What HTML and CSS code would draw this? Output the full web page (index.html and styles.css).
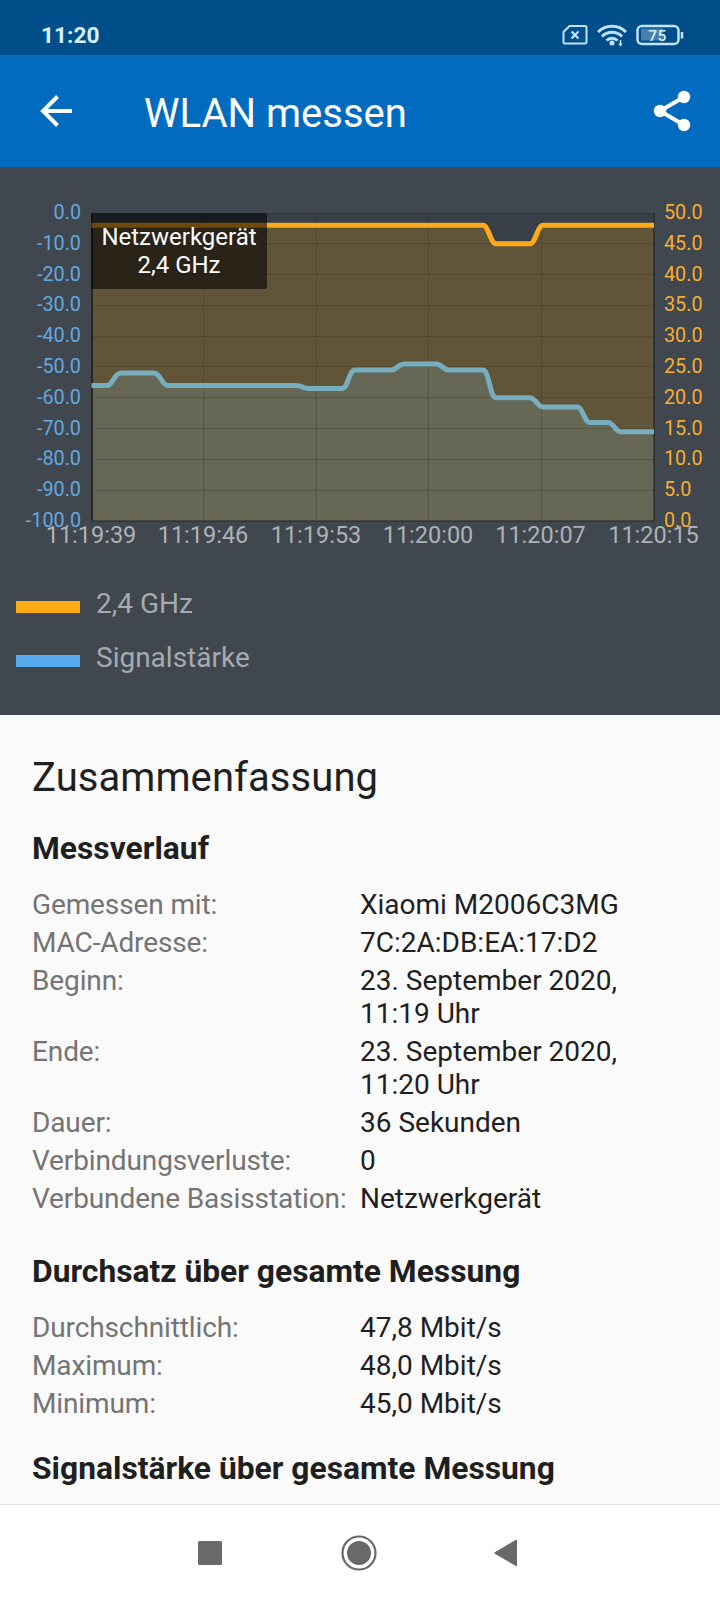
FILE: index.html
```html
<!DOCTYPE html>
<html lang="de">
<head>
<meta charset="utf-8">
<title>WLAN messen</title>
<link rel="stylesheet" href="styles.css">
</head>
<body>
<div class="screen">
  <header class="status">
    <span class="clock">11:20</span>
    <svg class="status-icons" width="124" height="28" viewBox="0 0 124 28" fill="none" stroke="#c3e2fb">
      <path d="M8.500 4H24a1.500 1.500 0 0 1 1.500 1.500V20a1.500 1.500 0 0 1-1.500 1.500H4A1.500 1.500 0 0 1 2.500 20V10z" stroke-width="2"/>
      <path d="M10.500 9.500l7 7m0-7l-7 7" stroke-width="2.200"/>
      <path d="M37 10a20 20 0 0 1 28 0M41 14.500a14 14 0 0 1 20 0M45.500 18.500a8 8 0 0 1 11 0" stroke-width="2.900"/>
      <circle cx="51" cy="21" r="2.500" fill="#c3e2fb" stroke="none"/>
      <path d="M59.500 18v6" stroke-width="1.500"/>
      <path d="M57.500 21.500h4l-2 3z" fill="#c3e2fb" stroke="none"/>
      <rect x="80" y="6.500" width="22" height="12" fill="#4681ae" stroke="none"/>
      <rect x="76.500" y="4" width="41" height="18" rx="4.500" stroke-width="2.500"/>
      <path d="M121 10v6.500" stroke-width="2.500"/>
      <text class="battery" x="96.500" y="18.500">75</text>
    </svg>
  </header>
  <div class="appbar">
    <svg width="34" height="34" viewBox="0 0 34 34" fill="none" stroke="#fff" stroke-width="4"><path d="M33 17H4M18.500 2.500L4 17l14.500 14.500"/></svg>
    <h1 class="title">WLAN messen</h1>
    <svg width="38" height="42" viewBox="0 0 38 42" fill="#fff"><path d="M31 7L7 21l24 14" fill="none" stroke="#fff" stroke-width="4"/><circle cx="31" cy="7" r="6.200"/><circle cx="7" cy="21" r="6.200"/><circle cx="31" cy="35" r="6.200"/></svg>
  </div>
  <section class="chart-panel">
    <svg class="chart" width="720" height="393" viewBox="0 167 720 393">
      <rect x="92" y="213" width="562" height="308" fill="#393f48"/>
      <path fill="#615539" d="M92 225.300H483C488.500 225.300 490.500 243.800 496 243.800H530C535.500 243.800 537.500 225.300 543 225.300H654V521H92z"/>
      <path fill="#666755" d="M92 385.500H107C113 385.500 114 373 121 373H154C160 373 162 385.500 168 385.500H296C302 385.500 303 388.500 309 388.500H342C348 388.500 349 370 355 370H391C397 370 398 364 404 364H436C442 364 443 370 449 370H483C489 370 490 397.700 496 397.700H530C536 397.700 537 407 543 407H577C583 407 584 422.500 590 422.500H608C614 422.500 615 431.800 621 431.800H654V521H92z"/>
      <path class="grid" d="M92 213.500H654M92 243.500H654M92 274.500H654M92 305.500H654M92 336.500H654M92 366.500H654M92 397.500H654M92 428.500H654M92 459.500H654M92 490.500H654M203.500 213V521M316.500 213V521M428.500 213V521M541.500 213V521"/>
      <path class="axis" d="M92 213V521"/>
      <path class="axis thin" d="M654 213V521M91 521H654.500"/>
      <path class="line-blue" d="M91.500 385.500H107C113 385.500 114 373 121 373H154C160 373 162 385.500 168 385.500H296C302 385.500 303 388.500 309 388.500H342C348 388.500 349 370 355 370H391C397 370 398 364 404 364H436C442 364 443 370 449 370H483C489 370 490 397.700 496 397.700H530C536 397.700 537 407 543 407H577C583 407 584 422.500 590 422.500H608C614 422.500 615 431.800 621 431.800H654"/>
      <path class="line-orange" d="M91.500 225.300H483C488.500 225.300 490.500 243.800 496 243.800H530C535.500 243.800 537.500 225.300 543 225.300H654"/>
      <g class="y-left">
        <text x="81" y="219">0.0</text><text x="81" y="250">-10.0</text><text x="81" y="281">-20.0</text><text x="81" y="311">-30.0</text><text x="81" y="342">-40.0</text><text x="81" y="373">-50.0</text><text x="81" y="404">-60.0</text><text x="81" y="435">-70.0</text><text x="81" y="465">-80.0</text><text x="81" y="496">-90.0</text><text x="81" y="527">-100.0</text>
      </g>
      <g class="y-right">
        <text x="664" y="219">50.0</text><text x="664" y="250">45.0</text><text x="664" y="281">40.0</text><text x="664" y="311">35.0</text><text x="664" y="342">30.0</text><text x="664" y="373">25.0</text><text x="664" y="404">20.0</text><text x="664" y="435">15.0</text><text x="664" y="465">10.0</text><text x="664" y="496">5.0</text><text x="664" y="527">0.0</text>
      </g>
      <g class="x-axis">
        <text x="91" y="543">11:19:39</text><text x="203" y="543">11:19:46</text><text x="316" y="543">11:19:53</text><text x="428" y="543">11:20:00</text><text x="540.500" y="543">11:20:07</text><text x="653.500" y="543">11:20:15</text>
      </g>
      <rect x="91" y="213" width="176" height="76" rx="3" fill="#000" fill-opacity=".57"/>
      <g class="tip"><text x="179" y="245">Netzwerkgerät</text><text x="179" y="273">2,4 GHz</text></g>
    </svg>
    <div class="legend">
      <div class="legend-row"><i class="swatch orange"></i>2,4 GHz</div>
      <div class="legend-row"><i class="swatch blue"></i>Signalstärke</div>
    </div>
  </section>
  <main class="content">
    <h2 class="summary">Zusammenfassung</h2>
    <h3 class="sub">Messverlauf</h3>
    <dl class="rows">
      <dt>Gemessen mit:</dt><dd>Xiaomi M2006C3MG</dd>
      <dt>MAC-Adresse:</dt><dd>7C:2A:DB:EA:17:D2</dd>
      <dt>Beginn:</dt><dd>23. September 2020,<br>11:19 Uhr</dd>
      <dt>Ende:</dt><dd>23. September 2020,<br>11:20 Uhr</dd>
      <dt>Dauer:</dt><dd>36 Sekunden</dd>
      <dt>Verbindungsverluste:</dt><dd>0</dd>
      <dt>Verbundene Basisstation:</dt><dd>Netzwerkgerät</dd>
    </dl>
    <h3 class="sub sub-throughput">Durchsatz über gesamte Messung</h3>
    <dl class="rows">
      <dt>Durchschnittlich:</dt><dd>47,8 Mbit/s</dd>
      <dt>Maximum:</dt><dd>48,0 Mbit/s</dd>
      <dt>Minimum:</dt><dd>45,0 Mbit/s</dd>
    </dl>
    <h3 class="sub">Signalstärke über gesamte Messung</h3>
  </main>
  <nav class="navbar">
    <svg width="24" height="24" viewBox="0 0 24 24" fill="#696969"><rect width="24" height="24" rx="1.500"/></svg>
    <svg class="home" width="36" height="36" viewBox="0 0 36 36" fill="#696969"><circle cx="18" cy="18" r="16.500" fill="none" stroke="#696969" stroke-width="2.200"/><circle cx="18" cy="18" r="12"/></svg>
    <svg width="24" height="28" viewBox="0 0 24 28" fill="#696969"><path d="M.8 13.200L22 .8q1-.5 1 .6v25q0 1.100-1 .6L.8 14.800q-.8-.8 0-1.600z"/></svg>
  </nav>
</div>
</body>
</html>
```
FILE: styles.css
```css
* { box-sizing: border-box; margin: 0; }
body { font-family: Roboto, "Liberation Sans", sans-serif; background: #fafafa; }
.screen { width: 720px; height: 1600px; display: flex; flex-direction: column; overflow: hidden; }
svg { display: block; flex: none; }

.status { flex: none; height: 55px; background: #004e89; display: flex; justify-content: space-between; padding: 22px 35px 0 41px; color: #d5f0ff; }
.clock { font-size: 22.7px; font-weight: 700; line-height: 28px; }
.battery { fill: #d5eeff; stroke: none; font-size: 15.5px; font-weight: 500; letter-spacing: .5px; text-anchor: middle; }

.appbar { flex: none; height: 112px; background: #006bbf; display: flex; align-items: center; padding: 0 29px 0 39px; }
.title { flex: 1; margin-left: 71px; padding-top: 6px; color: #fff; font-size: 40px; line-height: 48px; font-weight: 400; }

.chart-panel { flex: none; height: 548px; background: #40474f; }
.grid { fill: none; stroke: #262110; stroke-opacity: .23; }
.axis { fill: none; stroke: #242725; stroke-width: 2; }
.axis.thin { stroke-width: 1.2; }
.line-blue, .line-orange { fill: none; stroke-width: 5; }
.line-blue { stroke: #77aebf; }
.line-orange { stroke: #ffaa1b; }
.y-left, .y-right { font-size: 19.8px; }
.y-left { fill: #63a9e0; text-anchor: end; }
.y-right { fill: #f7ad30; }
.x-axis { font-size: 23.5px; fill: #aeb1b5; text-anchor: middle; }
.tip { font-size: 24px; fill: #fff; text-anchor: middle; }

.legend { display: flex; flex-direction: column; gap: 20px; padding: 27px 16px 0; color: #a7aaaf; font-size: 28px; line-height: 34px; }
.legend-row { display: flex; align-items: center; gap: 16px; }
.swatch { width: 64px; height: 12px; margin-top: 5px; }
.orange { background: #ffab13; }
.blue { background: #58abef; }

.content { flex: 1; min-height: 0; padding: 39px 32px 0; color: #1f1f1f; }
.summary { font-size: 40px; font-weight: 400; line-height: 48px; letter-spacing: .07px; }
.sub { font-size: 31.8px; font-weight: 700; line-height: 38px; margin-top: 27px; }
.rows { display: grid; grid-template-columns: 328px 1fr; row-gap: 5px; margin: 21px 0 0; font-size: 28px; line-height: 33px; }
.rows dt { color: #747474; white-space: nowrap; letter-spacing: -.12px; }
.rows + .sub { margin-top: 29px; }
.rows + .sub-throughput { margin-top: 37px; }

.navbar { flex: none; height: 96px; background: #fff; border-top: 1px solid #dfdfdf; display: flex; align-items: center; justify-content: space-between; padding: 0 202px 0 198px; }
.home { margin-left: 2px; }
```
